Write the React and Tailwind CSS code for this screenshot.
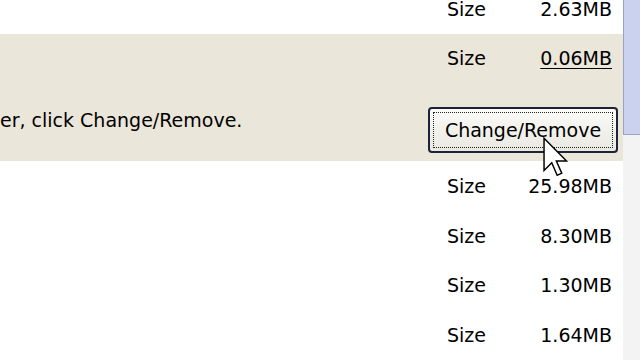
import React from 'react';

const sizesAbove = ['2.63MB'];
const sizesBelow = ['25.98MB', '8.30MB', '1.30MB', '1.64MB'];

const SizeRow = ({ value, underline, className = '' }) => (
  <div className={`flex items-center h-[50px] ${className}`}>
    <span className="ml-[447px] w-[40px]">Size</span>
    <span className={`flex-1 text-right pr-[11px] ${underline ? 'underline underline-offset-[3px]' : ''}`}>
      {value}
    </span>
  </div>
);

// XP style arrow pointer
const Cursor = () => (
  <svg className="absolute left-[543px] top-[137px]" width="25" height="40" viewBox="0 0 12 19">
    <path
      d="M0.5 0.5 L0.5 16 L4.2 12.3 L6.8 18.3 L9 17.3 L6.4 11.4 L11.3 11.4 Z"
      fill="#fff"
      stroke="#000"
      strokeWidth="0.7"
      strokeLinejoin="miter"
    />
  </svg>
);

export default function App() {
  return (
    <div
      className="relative w-[640px] h-[360px] overflow-hidden bg-white text-[19px] leading-[22px] text-black"
      style={{ fontFamily: '"DejaVu Sans", Tahoma, sans-serif' }}
    >
      <div className="flex h-full">
        {/* program list */}
        <div className="flex-1 flex flex-col">
          {sizesAbove.map((s) => (
            <SizeRow key={s} value={s} className="-mt-[16px] h-[50px]" />
          ))}

          {/* selected program */}
          <div className="bg-[#ebe6da] h-[128px] flex flex-col">
            <div className="flex items-center h-[48px]">
              <span className="ml-[447px] w-[40px]">Size</span>
              <span className="flex-1 text-right pr-[11px] underline underline-offset-[3px]">0.06MB</span>
            </div>
            <div className="flex justify-between items-start">
              <span className="pt-[27px]">er, click Change/Remove.</span>
              <button className="mt-[25px] mr-[5px] w-[190px] h-[46px] rounded-[4px] border-2 border-[#1d2236] bg-gradient-to-b from-[#fbfbf8] to-[#e9e8e1] p-[3px]">
                <div className="h-full w-full border border-dotted border-[#222] flex items-center justify-center">
                  Change/Remove
                </div>
              </button>
            </div>
          </div>

          {sizesBelow.map((s) => (
            <SizeRow key={s} value={s} />
          ))}
        </div>

        {/* right edge strip */}
        <div className="w-[17px] flex flex-col">
          <div className="h-[135px] bg-[#cbd2ef] border-l border-b border-[#9aa3c4]" />
          <div className="flex-1 bg-[#f3f3f3]" />
        </div>
      </div>

      <Cursor />
    </div>
  );
}
